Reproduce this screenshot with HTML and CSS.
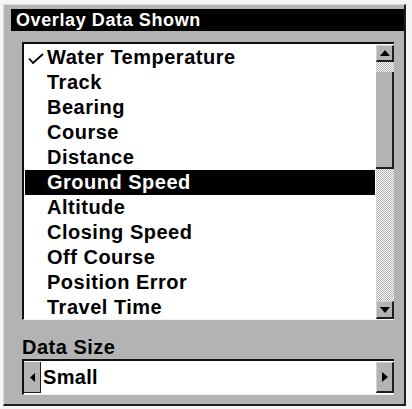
FILE: index.html
```html
<!DOCTYPE html>
<html>
<head>
<meta charset="utf-8">
<title>Overlay Data Shown</title>
<link rel="stylesheet" href="styles.css">
</head>
<body>
<div class="dialog">
  <div class="title">Overlay Data Shown</div>
  <div class="content">
    <div class="listbox">
      <ul class="items">
        <li class="item"><span class="mark"><svg width="16" height="11" viewBox="0 0 16 11"><path d="M1 5.5 L5 10 L15 1" fill="none" stroke="#000" stroke-width="1.8"/></svg></span><span>Water Temperature</span></li>
        <li class="item"><span class="mark"></span><span>Track</span></li>
        <li class="item"><span class="mark"></span><span>Bearing</span></li>
        <li class="item"><span class="mark"></span><span>Course</span></li>
        <li class="item"><span class="mark"></span><span>Distance</span></li>
        <li class="item selected"><span class="mark"></span><span>Ground Speed</span></li>
        <li class="item"><span class="mark"></span><span>Altitude</span></li>
        <li class="item"><span class="mark"></span><span>Closing Speed</span></li>
        <li class="item"><span class="mark"></span><span>Off Course</span></li>
        <li class="item"><span class="mark"></span><span>Position Error</span></li>
        <li class="item"><span class="mark"></span><span>Travel Time</span></li>
      </ul>
      <div class="scrollbar">
        <div class="sb-btn up"><svg width="10" height="6" viewBox="0 0 10 6"><polygon points="5,0 10,6 0,6" fill="#000"/></svg></div>
        <div class="track"><div class="thumb"></div></div>
        <div class="sb-btn down"><svg width="10" height="6" viewBox="0 0 10 6"><polygon points="0,0 10,0 5,6" fill="#000"/></svg></div>
      </div>
    </div>
    <div class="label">Data Size</div>
    <div class="select">
      <div class="sel-btn left"><svg width="5" height="9" viewBox="0 0 5 9"><polygon points="5,0 5,9 0,4.5" fill="#000"/></svg></div>
      <div class="sel-value">Small</div>
      <div class="sel-btn right"><svg width="6" height="10" viewBox="0 0 6 10"><polygon points="0,0 6,5 0,10" fill="#000"/></svg></div>
    </div>
  </div>
</div>
</body>
</html>
```
FILE: styles.css
```css
* { box-sizing: border-box; }

body {
  margin: 0;
  background: #f5f5f5;
  font-family: "Liberation Sans", Arial, sans-serif;
  font-weight: bold;
  color: #000;
}

.dialog {
  margin: 4px 0 0 3px;
  width: 403px;
  height: 402px;
  background: #b3b3b3;
  border-top: 1px solid #dcdcdc;
  border-left: 1px solid #dcdcdc;
  border-right: 2px solid #1e1e1e;
  border-bottom: 2px solid #1e1e1e;
  padding-top: 4px;
  display: flex;
  flex-direction: column;
}

.title {
  margin-left: 7px;
  height: 22px;
  background: #000;
  color: #fff;
  font-size: 18px;
  line-height: 21px;
  padding: 1px 0 0 5px;
  letter-spacing: 0.6px;
  white-space: nowrap;
}

.content {
  padding: 11px 10px 0 18px;
}

.listbox {
  display: flex;
  height: 278px;
  background: #fff;
  border-top: 2px solid #111;
  border-left: 2px solid #111;
  border-bottom: 1px solid #f4f4f4;
  overflow: hidden;
}

.items {
  flex: 1;
  list-style: none;
  margin: 0;
  padding: 1px 1px 0 1px;
}

.item {
  display: flex;
  height: 25px;
  line-height: 25px;
  font-size: 20px;
  letter-spacing: 0.5px;
  white-space: nowrap;
}

.item.selected {
  background: #000;
  color: #fff;
}

.mark {
  width: 16px;
  margin: 0 3px 0 3px;
  display: flex;
  align-items: flex-start;
}

.mark svg {
  margin-top: 8px;
}

.scrollbar {
  width: 18px;
  display: flex;
  flex-direction: column;
  padding-top: 1px;
}

.sb-btn {
  height: 17px;
  background: #b3b3b3;
  border-right: 2px solid #1e1e1e;
  border-bottom: 2px solid #1e1e1e;
  border-top: 1px solid #d0d0d0;
  border-left: 1px solid #d0d0d0;
  display: flex;
  align-items: center;
  justify-content: center;
}

.sb-btn.down {
  height: 18px;
}

.track {
  flex: 1;
  background: repeating-conic-gradient(#ffffff 0 25%, #b0b0b0 0 50%) 0 0 / 2px 2px;
}

.thumb {
  margin-top: 10px;
  height: 97px;
  background: #b3b3b3;
  border-right: 2px solid #1e1e1e;
  border-bottom: 2px solid #1e1e1e;
}

.label {
  margin-top: 15px;
  height: 24px;
  line-height: 24px;
  font-size: 20px;
  letter-spacing: 0.5px;
}

.select {
  display: flex;
  height: 36px;
  background: #fff;
  border-top: 2px solid #111;
  border-left: 2px solid #111;
  border-bottom: 1px solid #f4f4f4;
}

.sel-btn {
  margin: 1px 0;
  background: #b3b3b3;
  display: flex;
  align-items: center;
  justify-content: center;
}

.sel-btn.left {
  width: 17px;
  border-right: 1px solid #1e1e1e;
  border-bottom: 1px solid #1e1e1e;
}

.sel-btn.right {
  width: 18px;
  border-right: 2px solid #1e1e1e;
  border-bottom: 2px solid #1e1e1e;
  border-left: 1px solid #d0d0d0;
  border-top: 1px solid #d0d0d0;
}

.sel-value {
  flex: 1;
  padding-left: 2px;
  font-size: 20px;
  line-height: 33px;
  letter-spacing: 0.3px;
}
```
